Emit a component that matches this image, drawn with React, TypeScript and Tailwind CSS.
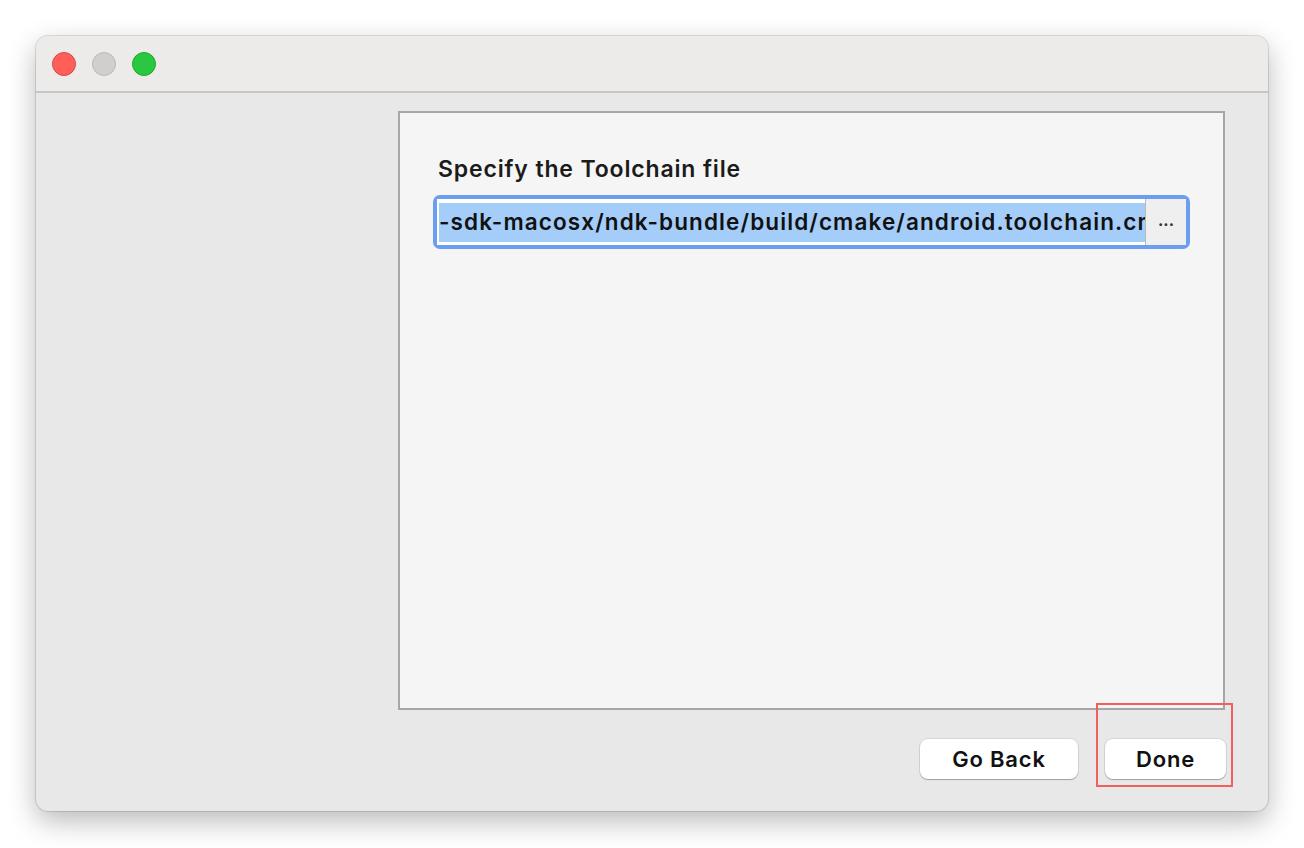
import React from "react";

export default function App() {
  const font = { fontFamily: "Inter, 'Noto Sans', 'Liberation Sans', sans-serif" };
  return (
    <div className="relative w-[1304px] h-[848px] bg-white pl-[36px] pt-[36px]" style={font}>
      <div className="w-[1232px] h-[775px] rounded-[12px] bg-[#e8e8e8] shadow-[0_10px_28px_rgba(0,0,0,0.28),0_0_0_1px_rgba(0,0,0,0.12)] overflow-hidden flex flex-col">
        <div className="h-[57px] bg-[#ecebea] border-b-2 border-[#c6c6c6] flex items-start gap-[16px] pl-[16px] pt-[16px] shrink-0">
          <div className="w-[24px] h-[24px] rounded-full bg-[#fe5f57] border border-[#e1443f]" />
          <div className="w-[24px] h-[24px] rounded-full bg-[#d0cfce] border border-[#b9b8b7]" />
          <div className="w-[24px] h-[24px] rounded-full bg-[#28c840] border border-[#1ea831]" />
        </div>
        <div className="flex-1 flex flex-col items-end pr-[43px] pt-[18px]">
          <div className="w-[827px] h-[599px] bg-[#f5f5f5] border-2 border-[#a6a6a6] pl-[38px] pr-[33px] pt-[40px]">
            <div className="text-[23px] font-semibold text-[#1b1b1b] leading-[32px] tracking-[0.85px]">Specify the Toolchain file</div>
            <div className="mt-[10px] w-[757px] h-[54px] rounded-[7px] bg-[#6b9ef0] p-[4px] -ml-[5px]">
              <div className="w-full h-full bg-white flex items-stretch">
                <div className="flex-1 overflow-hidden pl-[2px] pt-[4px] pb-[3px]">
                  <div className="h-full bg-[#a5cdfa] text-[22.5px] font-semibold text-[#111] leading-[37px] whitespace-nowrap overflow-hidden tracking-[1.1px]">
                    -sdk-macosx/ndk-bundle/build/cmake/android.toolchain.cmake
                  </div>
                </div>
                <div className="w-[41px] bg-[#efefef] border-l border-[#b9b9b9] flex items-center justify-center text-[16px] font-bold text-[#333] leading-none pb-[4px]">
                  ...
                </div>
              </div>
            </div>
          </div>
          <div className="flex gap-[27px] mt-[29px] mr-[-1px]">
            <button className="w-[158px] h-[40px] rounded-[8px] bg-white shadow-[0_1px_1px_rgba(0,0,0,0.25),0_0_0_1px_rgba(0,0,0,0.08)] text-[22px] font-semibold tracking-[0.8px] text-[#111]">Go Back</button>
            <button className="w-[121px] h-[40px] rounded-[8px] bg-white shadow-[0_1px_1px_rgba(0,0,0,0.25),0_0_0_1px_rgba(0,0,0,0.08)] text-[22px] font-semibold tracking-[0.8px] text-[#111]">Done</button>
          </div>
        </div>
      </div>
      <div className="absolute left-[1096px] top-[703px] w-[137px] h-[84px] border-2 border-[#f0605c]" />
    </div>
  );
}
